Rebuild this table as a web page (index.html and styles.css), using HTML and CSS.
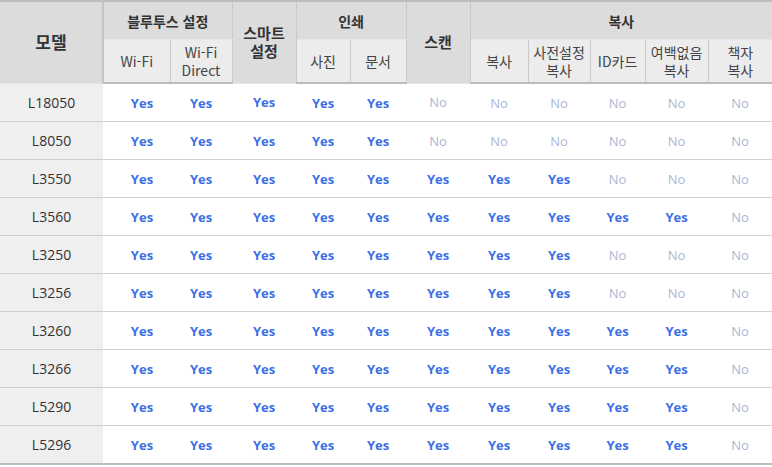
FILE: index.html
```html
<!DOCTYPE html>
<html lang="ko">
<head>
<meta charset="utf-8">
<link rel="stylesheet" href="styles.css">
</head>
<body>
<table class="spec">
  <colgroup>
    <col class="c-model"><col class="w67"><col class="w62"><col class="w64"><col class="w54"><col class="w56"><col class="w64"><col class="w58"><col class="w62"><col class="w55"><col class="w63"><col class="w64">
  </colgroup>
  <thead>
    <tr class="h1">
      <th rowspan="2" class="model-h">모델</th>
      <th colspan="2">블루투스 설정</th>
      <th rowspan="2" class="tall">스마트<br>설정</th>
      <th colspan="2">인쇄</th>
      <th rowspan="2" class="tall">스캔</th>
      <th colspan="5" class="last">복사</th>
    </tr>
    <tr class="h2">
      <th>Wi-Fi</th>
      <th>Wi-Fi<br>Direct</th>
      <th>사진</th>
      <th>문서</th>
      <th>복사</th>
      <th>사전설정<br>복사</th>
      <th>ID카드</th>
      <th>여백없음<br>복사</th>
      <th class="last">책자<br>복사</th>
    </tr>
  </thead>
  <tbody>
    <tr><td class="m">L18050</td><td class="y first">Yes</td><td class="y">Yes</td><td class="y">Yes</td><td class="y">Yes</td><td class="y">Yes</td><td class="n">No</td><td class="n">No</td><td class="n">No</td><td class="n">No</td><td class="n">No</td><td class="n">No</td></tr>
    <tr><td class="m">L8050</td><td class="y first">Yes</td><td class="y">Yes</td><td class="y">Yes</td><td class="y">Yes</td><td class="y">Yes</td><td class="n">No</td><td class="n">No</td><td class="n">No</td><td class="n">No</td><td class="n">No</td><td class="n">No</td></tr>
    <tr><td class="m">L3550</td><td class="y first">Yes</td><td class="y">Yes</td><td class="y">Yes</td><td class="y">Yes</td><td class="y">Yes</td><td class="y">Yes</td><td class="y">Yes</td><td class="y">Yes</td><td class="n">No</td><td class="n">No</td><td class="n">No</td></tr>
    <tr><td class="m">L3560</td><td class="y first">Yes</td><td class="y">Yes</td><td class="y">Yes</td><td class="y">Yes</td><td class="y">Yes</td><td class="y">Yes</td><td class="y">Yes</td><td class="y">Yes</td><td class="y">Yes</td><td class="y">Yes</td><td class="n">No</td></tr>
    <tr><td class="m">L3250</td><td class="y first">Yes</td><td class="y">Yes</td><td class="y">Yes</td><td class="y">Yes</td><td class="y">Yes</td><td class="y">Yes</td><td class="y">Yes</td><td class="y">Yes</td><td class="n">No</td><td class="n">No</td><td class="n">No</td></tr>
    <tr><td class="m">L3256</td><td class="y first">Yes</td><td class="y">Yes</td><td class="y">Yes</td><td class="y">Yes</td><td class="y">Yes</td><td class="y">Yes</td><td class="y">Yes</td><td class="y">Yes</td><td class="n">No</td><td class="n">No</td><td class="n">No</td></tr>
    <tr><td class="m">L3260</td><td class="y first">Yes</td><td class="y">Yes</td><td class="y">Yes</td><td class="y">Yes</td><td class="y">Yes</td><td class="y">Yes</td><td class="y">Yes</td><td class="y">Yes</td><td class="y">Yes</td><td class="y">Yes</td><td class="n">No</td></tr>
    <tr><td class="m">L3266</td><td class="y first">Yes</td><td class="y">Yes</td><td class="y">Yes</td><td class="y">Yes</td><td class="y">Yes</td><td class="y">Yes</td><td class="y">Yes</td><td class="y">Yes</td><td class="y">Yes</td><td class="y">Yes</td><td class="n">No</td></tr>
    <tr><td class="m">L5290</td><td class="y first">Yes</td><td class="y">Yes</td><td class="y">Yes</td><td class="y">Yes</td><td class="y">Yes</td><td class="y">Yes</td><td class="y">Yes</td><td class="y">Yes</td><td class="y">Yes</td><td class="y">Yes</td><td class="n">No</td></tr>
    <tr><td class="m">L5296</td><td class="y first">Yes</td><td class="y">Yes</td><td class="y">Yes</td><td class="y">Yes</td><td class="y">Yes</td><td class="y">Yes</td><td class="y">Yes</td><td class="y">Yes</td><td class="y">Yes</td><td class="y">Yes</td><td class="n">No</td></tr>
  </tbody>
</table>
</body>
</html>
```

FILE: styles.css
```css
html, body {
  margin: 0;
  padding: 0;
  background: #ffffff;
}

.spec {
  width: 772px;
  table-layout: fixed;
  border-collapse: collapse;
  border-spacing: 0;
  font-family: "Open Sans", "Noto Sans CJK KR", sans-serif;
  border-top: 2px solid #bdbdbd;
}

.c-model { width: 103px; }
.w54 { width: 54px; }
.w55 { width: 55px; }
.w56 { width: 56px; }
.w58 { width: 58px; }
.w62 { width: 62px; }
.w63 { width: 63px; }
.w64 { width: 64px; }
.w67 { width: 67px; }

.spec th {
  padding: 0;
  text-align: center;
  vertical-align: middle;
  border-right: 1px solid #c9c9c9;
  font-family: "Noto Sans CJK KR", "Open Sans", sans-serif;
  line-height: 18px;
}

.spec th.last { border-right: none; }

.h1 th {
  height: 37px;
  background: #dcdcdc;
  color: #333333;
  font-size: 14px;
  font-weight: 700;
  border-bottom: 1px solid #e6e6e6;
}

.h1 th.tall {
  font-size: 15px;
  line-height: 18px;
}

.h1 th.model-h {
  font-size: 17px;
  border-right: 2px solid #c4c4c4;
}

.h2 th {
  height: 42px;
  background: #ececec;
  color: #444444;
  font-size: 14px;
  font-weight: 400;
  border-bottom: 2px solid #bdbdbd;
}

.spec td {
  height: 37px;
  padding: 0;
  text-align: center;
  vertical-align: middle;
  border-bottom: 1px solid #d0d0d0;
  font-size: 13px;
}

.spec td.first {
  padding-left: 11px;
}

.spec tbody tr:last-child td {
  border-bottom: 2px solid #bdbdbd;
}

.spec td.m {
  background: #efefef;
  color: #333333;
  font-size: 14px;
  font-weight: 400;
}

.spec td.y {
  color: #3b6fe6;
  font-weight: 700;
}

.spec td.n {
  color: #aab6d6;
  font-weight: 400;
}
```
